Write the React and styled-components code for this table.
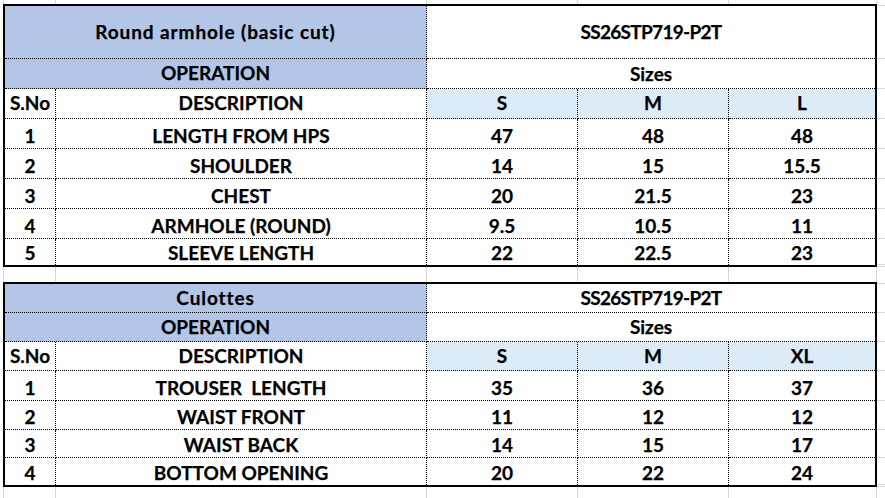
import React from "react";
import styled, { createGlobalStyle } from "styled-components";

const GRID = "#d9d9d9";
const BLUE = "#b4c6e7";
const PALE = "#ddebf7";
const GRID_X = [3, 55, 426, 577, 728, 876];

const GlobalStyle = createGlobalStyle`
  html, body {
    margin: 0;
    padding: 0;
    background: #fff;
  }
  body {
    font-family: Lato, "Open Sans", "Liberation Sans", sans-serif;
  }
`;

// the worksheet behind the tables, with its faint column gridlines
const Sheet = styled.main`
  display: flex;
  flex-direction: column;
  gap: 15px;
  width: 885px;
  min-height: 100vh;
  box-sizing: border-box;
  padding: 4px 0 0 3px;
  background-color: #fff;
  background-image: ${GRID_X.map(() => `linear-gradient(${GRID}, ${GRID})`).join(", ")};
  background-size: 1px 100%;
  background-repeat: no-repeat;
  background-position: ${GRID_X.map((x) => `${x}px 0`).join(", ")};
`;

const Block = styled.section`
  display: flex;
  align-items: flex-start;
`;

const SpecTable = styled.table`
  table-layout: fixed;
  width: 874px;
  border-collapse: separate;
  border-spacing: 0;
  border: 2px solid #000;
  background: #fff;
  color: #000;
  font-size: 19px;
  font-weight: 700;
  -webkit-text-stroke: 0.25px #000;
`;

const Row = styled.tr`
  height: ${(p) => p.$h}px;
`;

const Cell = styled.td`
  box-sizing: border-box;
  padding: 0 2px ${(p) => p.$pb || 0}px;
  text-align: center;
  white-space: pre;
  line-height: 1.2;
  letter-spacing: ${(p) => p.$track || 0}px;
  vertical-align: ${(p) => p.$valign || "bottom"};
  background: ${(p) => p.$bg || "transparent"};
  border-right: 1px dotted #000;
  border-bottom: 1px dotted #000;

  &:last-child {
    border-right: none;
  }
  tr:last-child > & {
    border-bottom: none;
  }
`;

// gridline stubs that run on to the right of each table
const Gutter = styled.div`
  display: flex;
  flex-direction: column;
  width: 9px;
`;

const Stub = styled.div`
  box-sizing: border-box;
  height: ${(p) => p.$h}px;
  border-bottom: 1px solid ${GRID};
`;

const tables = [
  {
    title: "Round armhole (basic cut)",
    code: "SS26STP719-P2T",
    sizes: ["S", "M", "L"],
    heights: [53, 30, 30],
    rows: [
      ["1", "LENGTH FROM HPS", "47", "48", "48", 30],
      ["2", "SHOULDER", "14", "15", "15.5", 30],
      ["3", "CHEST", "20", "21.5", "23", 30],
      ["4", "ARMHOLE (ROUND)", "9.5", "10.5", "11", 30],
      ["5", "SLEEVE LENGTH", "22", "22.5", "23", 26],
    ],
  },
  {
    title: "Culottes",
    code: "SS26STP719-P2T",
    sizes: ["S", "M", "XL"],
    heights: [29, 29, 29],
    rows: [
      ["1", "TROUSER  LENGTH", "35", "36", "37", 30],
      ["2", "WAIST FRONT", "11", "12", "12", 29],
      ["3", "WAIST BACK", "14", "15", "17", 28],
      ["4", "BOTTOM OPENING", "20", "22", "24", 27],
    ],
  },
];

const MeasureTable = ({ table }) => {
  const [titleH, opH, headH] = table.heights;
  const stubs = [2, titleH, opH, headH, ...table.rows.map((r) => r[5]), 2];

  return (
    <Block>
      <SpecTable>
        <colgroup>
          <col style={{ width: 51 }} />
          <col style={{ width: 371 }} />
          <col style={{ width: 151 }} />
          <col style={{ width: 151 }} />
          <col style={{ width: 146 }} />
        </colgroup>
        <tbody>
          <Row $h={titleH}>
            <Cell colSpan={2} $bg={BLUE} $valign="middle" $track={0.9}>
              {table.title}
            </Cell>
            <Cell colSpan={3} $valign="middle" $track={-0.7}>
              {table.code}
            </Cell>
          </Row>
          <Row $h={opH}>
            <Cell colSpan={2} $bg={BLUE} $valign="middle">
              OPERATION
            </Cell>
            <Cell colSpan={3} $pb={2}>
              Sizes
            </Cell>
          </Row>
          <Row $h={headH}>
            <Cell $valign="middle">S.No</Cell>
            <Cell $valign="middle">DESCRIPTION</Cell>
            {table.sizes.map((s) => (
              <Cell key={s} $bg={PALE} $valign="middle">
                {s}
              </Cell>
            ))}
          </Row>
          {table.rows.map(([no, desc, a, b, c, h]) => (
            <Row key={no} $h={h}>
              <Cell>{no}</Cell>
              <Cell>{desc}</Cell>
              <Cell>{a}</Cell>
              <Cell>{b}</Cell>
              <Cell>{c}</Cell>
            </Row>
          ))}
        </tbody>
      </SpecTable>
      <Gutter>
        {stubs.map((h, i) => (
          <Stub key={i} $h={h} />
        ))}
      </Gutter>
    </Block>
  );
};

export default function App() {
  return (
    <>
      <GlobalStyle />
      <Sheet>
        {tables.map((t) => (
          <MeasureTable key={t.title} table={t} />
        ))}
      </Sheet>
    </>
  );
}
